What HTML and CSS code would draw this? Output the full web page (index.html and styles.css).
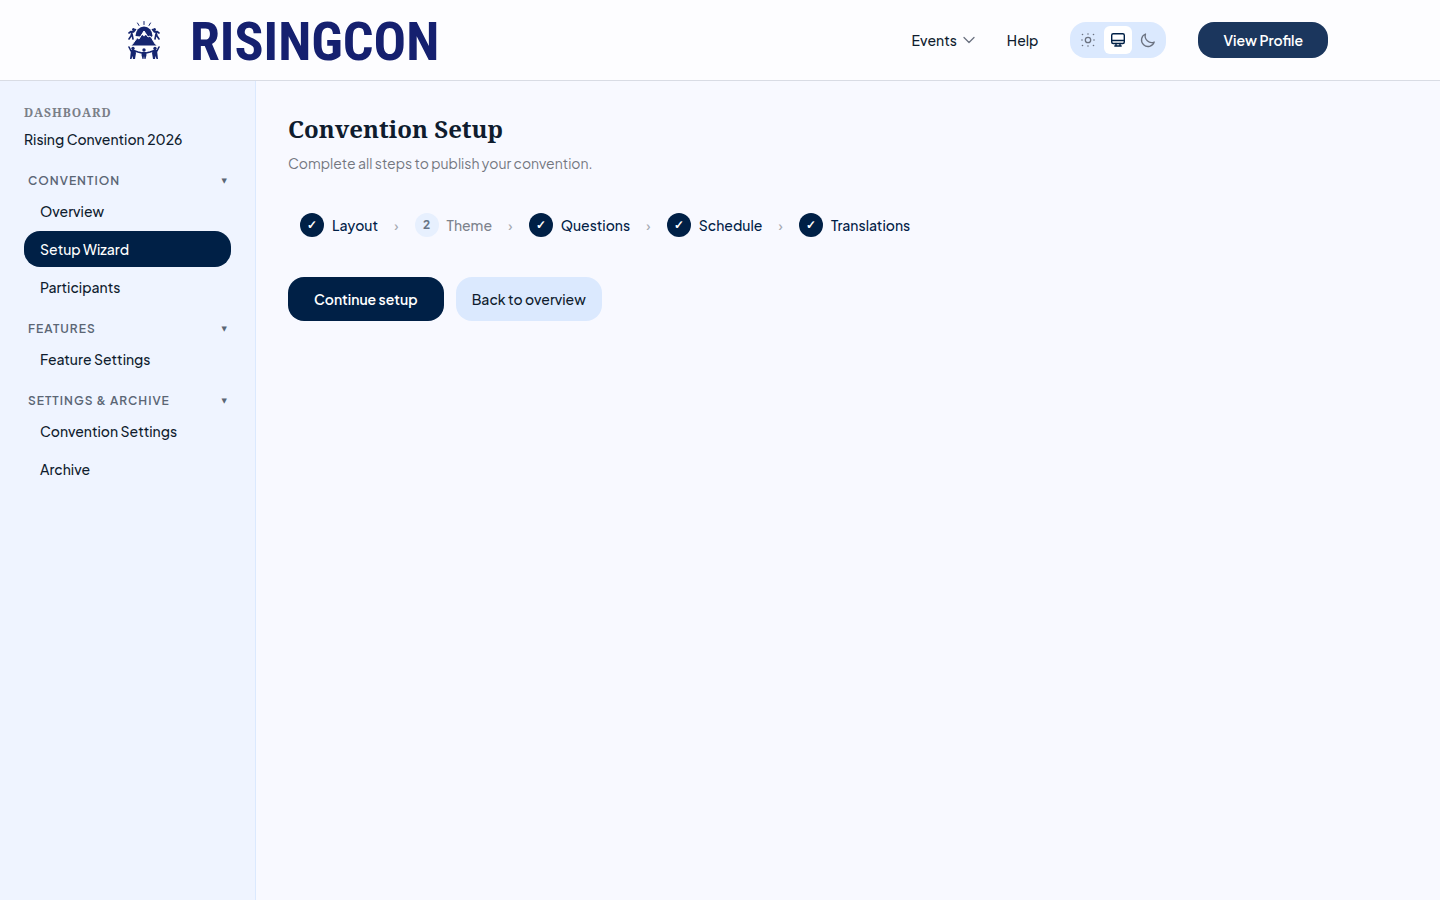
FILE: index.html
```html
<!DOCTYPE html>
<html lang="en">
<head>
<meta charset="utf-8">
<meta name="viewport" content="width=device-width, initial-scale=1">
<title>Convention Setup</title>
<link rel="stylesheet" href="styles.css">
</head>
<body>
<header class="header">
  <div class="header-inner">
    <a class="brand" href="#">
      <svg class="emblem" viewBox="0 0 32 40" aria-hidden="true">
        <g stroke="#15256f" stroke-width="1" stroke-linecap="round">
          <path d="M16 1.500v3M9.500 3l1.500 2.500M22.500 3l-1.500 2.500"/>
        </g>
        <path fill="#15256f" d="M7.500 16a8.500 9.500 0 0 1 17 0l-2 1.500z"/>
        <path fill="#15256f" stroke="#fdfdff" stroke-width="1" d="M2.500 26c3-1.500 4-6 7-8l1.500 1 5-8 4 6 2-1c3 3 4 8 7.500 10z"/>
        <path fill="#fdfdff" d="M16 11l3 4.500-1.500-.5-1.500 1.500-1.500-1.500-1.500.5z"/>
        <g fill="#15256f">
          <circle cx="5.500" cy="9.500" r="1.500"/><circle cx="26.500" cy="9.500" r="1.500"/>
          <circle cx="5" cy="28.500" r="1.700"/><circle cx="16" cy="30" r="1.700"/><circle cx="27" cy="28.500" r="1.700"/>
          <path d="M3 30h4l1 3-1 6H5l-.5-3-1 3H2zM14 32h4l.5 3-1 4h-1l-.5-3-.5 3h-1l-1-4zM25 30h4l1 9h-1.500l-1-3-.5 3h-2l-1-6z"/>
        </g>
        <g fill="none" stroke="#15256f" stroke-width="1.600" stroke-linecap="round" stroke-linejoin="round">
          <path d="M1 13l2-1.500 2.500.5L7.500 9.500M4 12l-1 4-2 3M4 14l1 5M31 13l-2-1.500-2.500.5L24.500 9.500M28 12l1 4 2 3M28 14l-1 5"/>
          <path d="M1 27l2 4M7 31l3 1 4 1M18 33l4-1 3-1M31 27l-2 4"/>
        </g>
      </svg>
      <span class="wordmark">RISINGCON</span>
    </a>
    <nav class="top-nav" aria-label="Main">
      <button class="nav-link" type="button">Events
        <svg width="12" height="12" viewBox="0 0 12 12" fill="none" stroke="#6b7280" stroke-width="1.300" stroke-linecap="round" stroke-linejoin="round" aria-hidden="true"><path d="M1 3.500l5 5 5-5"/></svg>
      </button>
      <a class="nav-link" href="#">Help</a>
      <div class="theme-toggle" role="group" aria-label="Theme">
        <button class="theme-option" type="button" aria-label="Light">
          <svg width="16" height="16" viewBox="0 0 16 16" fill="none" stroke="currentColor" stroke-width="1.300" aria-hidden="true"><circle cx="8" cy="8" r="2.700"/><path stroke-width="1.600" stroke-linecap="round" d="M8 2h.01M8 14h.01M2 8h.01M14 8h.01M2.500 2.500h.01M13.500 2.500h.01M2.500 13.500h.01M13.500 13.500h.01"/></svg>
        </button>
        <button class="theme-option theme-option-active" type="button" aria-label="System" aria-pressed="true">
          <svg width="16" height="16" viewBox="0 0 16 16" fill="none" stroke="currentColor" stroke-width="1.400" stroke-linecap="round" stroke-linejoin="round" aria-hidden="true"><rect x="1.700" y="1.700" width="12.600" height="9.800" rx="1.500"/><path d="M2 8.500h12M6 11.500v2.500M10 11.500v2.500M4.800 14h6.400"/></svg>
        </button>
        <button class="theme-option" type="button" aria-label="Dark">
          <svg width="16" height="16" viewBox="0 0 16 16" fill="none" stroke="currentColor" stroke-width="1.300" stroke-linecap="round" stroke-linejoin="round" aria-hidden="true"><path d="M14.200 10A6.500 6.500 0 1 1 5.500 2a6.500 6.500 0 0 0 8.700 8z"/></svg>
        </button>
      </div>
      <a class="profile-button" href="#">View Profile</a>
    </nav>
  </div>
</header>
<div class="shell">
  <aside class="sidebar">
    <div class="context-label">DASHBOARD</div>
    <div class="context-name">Rising Convention 2026</div>
    <nav class="groups" aria-label="Dashboard">
      <section class="group">
        <button class="group-toggle" type="button" aria-expanded="true">CONVENTION <span class="caret">▼</span></button>
        <a class="item" href="#">Overview</a>
        <a class="item item-active" href="#" aria-current="page">Setup Wizard</a>
        <a class="item" href="#">Participants</a>
      </section>
      <section class="group">
        <button class="group-toggle" type="button" aria-expanded="true">FEATURES <span class="caret">▼</span></button>
        <a class="item" href="#">Feature Settings</a>
      </section>
      <section class="group">
        <button class="group-toggle" type="button" aria-expanded="true">SETTINGS &amp; ARCHIVE <span class="caret">▼</span></button>
        <a class="item" href="#">Convention Settings</a>
        <a class="item" href="#">Archive</a>
      </section>
    </nav>
  </aside>
  <main class="main">
    <h1 class="title">Convention Setup</h1>
    <p class="subtitle">Complete all steps to publish your convention.</p>
    <div class="steps">
      <a class="step" href="#"><span class="dot dot-done">✓</span>Layout</a>
      <span class="separator">›</span>
      <a class="step step-pending" href="#"><span class="dot">2</span>Theme</a>
      <span class="separator">›</span>
      <a class="step" href="#"><span class="dot dot-done">✓</span>Questions</a>
      <span class="separator">›</span>
      <a class="step" href="#"><span class="dot dot-done">✓</span>Schedule</a>
      <span class="separator">›</span>
      <a class="step" href="#"><span class="dot dot-done">✓</span>Translations</a>
    </div>
    <div class="actions">
      <button class="button button-primary" type="button">Continue setup</button>
      <button class="button button-secondary" type="button">Back to overview</button>
    </div>
  </main>
</div>
</body>
</html>
```

FILE: styles.css
```css
* { box-sizing: border-box; }
body {
  margin: 0;
  min-height: 100vh;
  display: flex;
  flex-direction: column;
  background: #f8f9ff;
  color: #0f1c2e;
  font-family: "Plus Jakarta Sans", Inter, "Liberation Sans", sans-serif;
  font-size: 14px;
  font-weight: 500;
  line-height: 20px;
}
a { color: inherit; text-decoration: none; }
button { font: inherit; color: inherit; border: 0; background: none; padding: 0; cursor: pointer; }
svg { display: block; flex: none; }

.header { background: #fdfdff; border-bottom: 1px solid #d9dce4; }
.header-inner {
  max-width: 1280px;
  min-height: 80px;
  margin: 0 auto;
  padding: 0 32px;
  display: flex;
  align-items: center;
  justify-content: space-between;
}
.brand { display: flex; align-items: center; gap: 30px; padding-left: 16px; }
.emblem { width: 32px; height: 40px; }
.wordmark {
  padding-top: 4px;
  color: #15206f;
  font-family: "Liberation Sans Narrow", "Roboto Condensed", Roboto, sans-serif;
  font-size: 54px;
  font-weight: 700;
  line-height: 56px;
}
.top-nav { display: flex; align-items: center; gap: 32px; }
.nav-link { display: flex; align-items: center; gap: 6px; }
.theme-toggle { display: flex; gap: 2px; padding: 4px; border-radius: 16px; background: #dbe9fe; }
.theme-option {
  width: 28px;
  height: 28px;
  display: grid;
  place-items: center;
  border-radius: 6px;
  color: #6b7280;
}
.theme-option-active { background: #fff; color: #002046; }
.profile-button {
  padding: 8px 25px;
  border-radius: 16px;
  background: #1b365d;
  color: #fff;
  font-weight: 600;
}

.shell { flex: 1; display: flex; }
.sidebar {
  flex: 0 0 256px;
  padding: 24px;
  background: #eff4ff;
  border-right: 1px solid #dbe9fe;
}
.context-label {
  color: #7b7f88;
  font-family: "Noto Serif", "Liberation Serif", serif;
  font-size: 12px;
  font-weight: 700;
  letter-spacing: 1px;
  line-height: 16px;
}
.context-name { margin-top: 8px; }
.groups { display: flex; flex-direction: column; gap: 12px; margin-top: 20px; }
.group { display: flex; flex-direction: column; gap: 2px; }
.group-toggle {
  display: flex;
  align-items: center;
  justify-content: space-between;
  padding: 4px 4px 2px;
  color: #5b6675;
  font-size: 12px;
  font-weight: 600;
  letter-spacing: 1px;
  line-height: 16px;
}
.caret { font-family: "DejaVu Sans", sans-serif; font-size: 7px; letter-spacing: 0; }
.item { padding: 8px 16px; border-radius: 16px; }
.item-active { background: #002046; color: #fff; }

.main { flex: 1; min-width: 0; padding: 32px; }
.title {
  margin: 0;
  font-family: "Noto Serif", "Liberation Serif", serif;
  font-size: 24px;
  font-weight: 700;
  line-height: 32px;
}
.subtitle { margin: 8px 0 32px; color: #74777f; font-weight: 400; }
.steps { display: flex; flex-wrap: wrap; align-items: center; }
.step { display: flex; align-items: center; gap: 8px; padding: 8px 12px; color: #002046; }
.dot {
  width: 24px;
  height: 24px;
  display: grid;
  place-items: center;
  border-radius: 50%;
  background: #002046;
  color: #fff;
  font-size: 12px;
  font-weight: 700;
  line-height: 16px;
}
.dot-done { font-family: "Liberation Sans", sans-serif; }
.step-pending { color: #7d828c; }
.step-pending .dot { background: #e7f0fe; color: #667485; }
.separator { padding: 0 4px; color: #a5a9b2; }
.actions { display: flex; flex-wrap: wrap; gap: 12px; margin-top: 32px; }
.button { min-height: 44px; border-radius: 16px; }
.button-primary { padding: 0 26px; background: #002046; color: #fff; font-weight: 600; }
.button-secondary { padding: 0 16px; background: #dbe9fe; }
```
